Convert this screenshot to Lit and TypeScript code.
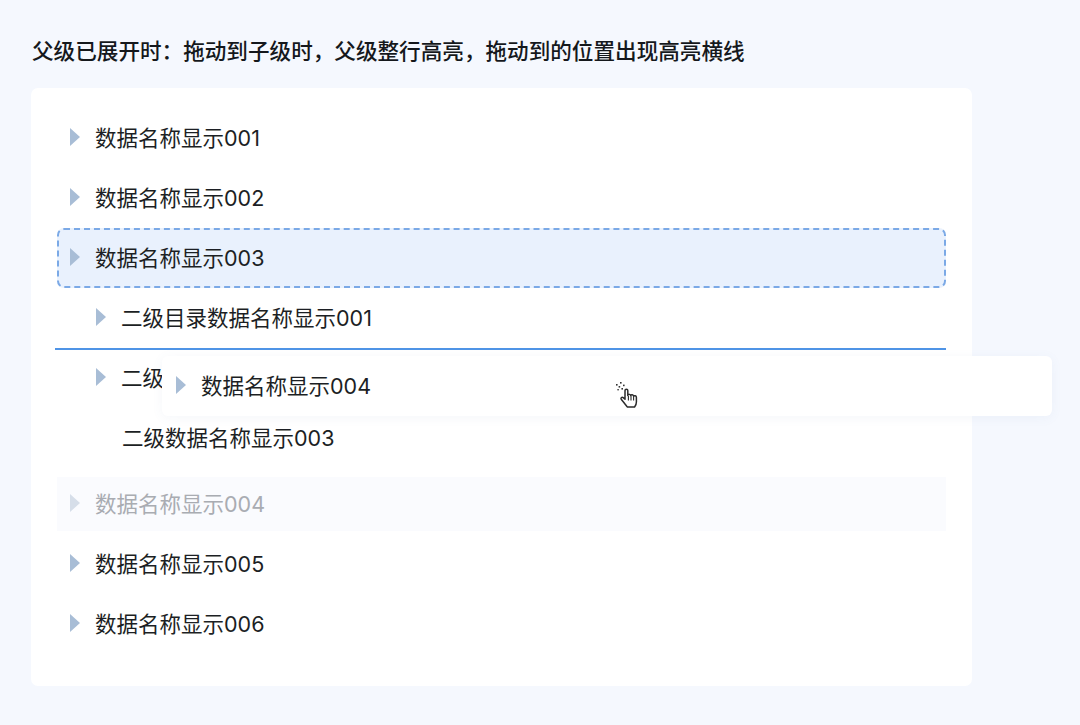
import { LitElement, html, css, svg } from 'lit';
import { customElement } from 'lit/decorators.js';
import { classMap } from 'lit/directives/class-map.js';

type Row = {
  label: string;
  child?: boolean;
  leaf?: boolean;
  over?: boolean;
  source?: boolean;
  dropBefore?: boolean;
};

const ROWS: Row[] = [
  { label: '数据名称显示001' },
  { label: '数据名称显示002' },
  { label: '数据名称显示003', over: true },
  { label: '二级目录数据名称显示001', child: true },
  { label: '二级目录数据名称显示002', child: true, dropBefore: true },
  { label: '二级数据名称显示003', child: true, leaf: true },
  { label: '数据名称显示004', source: true },
  { label: '数据名称显示005' },
  { label: '数据名称显示006' },
];

const arrow = html`<svg class="arrow" width="10" height="18" viewBox="0 0 10 18">
  <path d="M0 0 L10 9 L0 18 Z" fill="currentColor"></path>
</svg>`;

const grabCursor = svg`
  <g fill="#333">
    <rect x="0" y="2" width="1.6" height="1.6"></rect>
    <rect x="4" y="0" width="1.6" height="1.6"></rect>
    <rect x="2.6" y="4" width="1.6" height="1.6"></rect>
    <rect x="7" y="2.6" width="1.6" height="1.6"></rect>
    <rect x="5.4" y="6" width="1.6" height="1.6"></rect>
    <rect x="1.4" y="7" width="1.4" height="1.4"></rect>
  </g>
  <path d="M9 22 L5.2 17.2 C4.4 16 6 14.6 7.2 15.6 L9 17.2 L9 8.6 C9 6.8 11.8 6.8 11.8 8.6 L11.8 13.4 C12.2 12 14.6 12 14.8 13.6 C15.2 12.4 17.4 12.6 17.6 14.2 C18.2 13.4 20.4 13.6 20.4 15.4 L20.4 20 C20.4 22.6 19.4 24 18.6 25 L11.4 25 C10.6 24.2 9.8 23 9 22 Z"
    fill="#fff" stroke="#2b2b2b" stroke-width="1.5" stroke-linejoin="round"></path>
  <path d="M12.4 14 V18.4 M15 14 V18.4 M17.6 14.6 V18.4" fill="none" stroke="#2b2b2b" stroke-width="1.1"></path>
`;

@customElement('app-root')
export class AppRoot extends LitElement {
  static styles = css`
    :host {
      display: block;
      width: 1080px;
      height: 725px;
      overflow: hidden;
      box-sizing: border-box;
      padding: 36px 108px 0 31px;
      background: #f5f8fe;
      color: #1c1f24;
      font-family: Inter, 'Noto Sans CJK SC', sans-serif;
    }
    .title {
      margin: 0 0 22px 1px;
      height: 30px;
      font-size: 21.6px;
      line-height: 30px;
      font-weight: 500;
      color: #15181c;
      white-space: nowrap;
    }
    .card {
      position: relative;
      box-sizing: border-box;
      height: 598px;
      padding: 20px 26px;
      background: #fff;
      border-radius: 7px;
    }
    .row {
      position: relative;
      display: flex;
      align-items: center;
      box-sizing: border-box;
      width: 889px;
      height: 60px;
      padding-left: 13px;
      font-size: 21.5px;
      white-space: nowrap;
    }
    .label {
      margin-left: -1px;
      margin-bottom: 4px;
    }
    .arrow {
      flex: none;
      margin-right: 16px;
      margin-top: -2px;
      color: #a8bdd6;
    }
    .row.child {
      padding-left: 39px;
    }
    .row.leaf .label {
      margin-left: 26px;
    }
    .row.over {
      background: #e9f1fd;
      border: 2px dashed #7ba9e6;
      border-radius: 7px;
      padding-left: 11px;
    }
    .row.source {
      margin-top: 6px;
      border-top: 3px solid transparent;
      border-bottom: 3px solid transparent;
      background: #fafbfe;
      background-clip: padding-box;
      color: #a9acb2;
    }
    .row.source .arrow {
      color: #d6dee9;
    }
    .row.drop::before {
      content: '';
      position: absolute;
      left: -2px;
      right: 0;
      top: 0;
      height: 2px;
      background: #4f94e6;
    }
    .ghost {
      position: absolute;
      left: 131px;
      top: 268px;
      display: flex;
      align-items: center;
      box-sizing: border-box;
      width: 890px;
      height: 60px;
      padding-left: 14px;
      background: #fff;
      border-radius: 6px;
      box-shadow: 0 2px 12px rgba(90, 120, 170, 0.06);
      font-size: 21.5px;
      white-space: nowrap;
    }
    .cursor {
      position: absolute;
      left: 584px;
      top: 294px;
    }
  `;

  renderRow(row: Row) {
    const classes = {
      row: true,
      child: !!row.child,
      leaf: !!row.leaf,
      over: !!row.over,
      source: !!row.source,
      drop: !!row.dropBefore,
    };
    return html`<div class=${classMap(classes)}>
      ${row.leaf ? '' : arrow}<span class="label">${row.label}</span>
    </div>`;
  }

  render() {
    return html`
      <h1 class="title">父级已展开时：拖动到子级时，父级整行高亮，拖动到的位置出现高亮横线</h1>
      <div class="card">
        ${ROWS.map((row) => this.renderRow(row))}
        <div class="ghost">${arrow}<span class="label">数据名称显示004</span></div>
        <svg class="cursor" width="24" height="26" viewBox="0 0 22 26">${grabCursor}</svg>
      </div>
    `;
  }
}
